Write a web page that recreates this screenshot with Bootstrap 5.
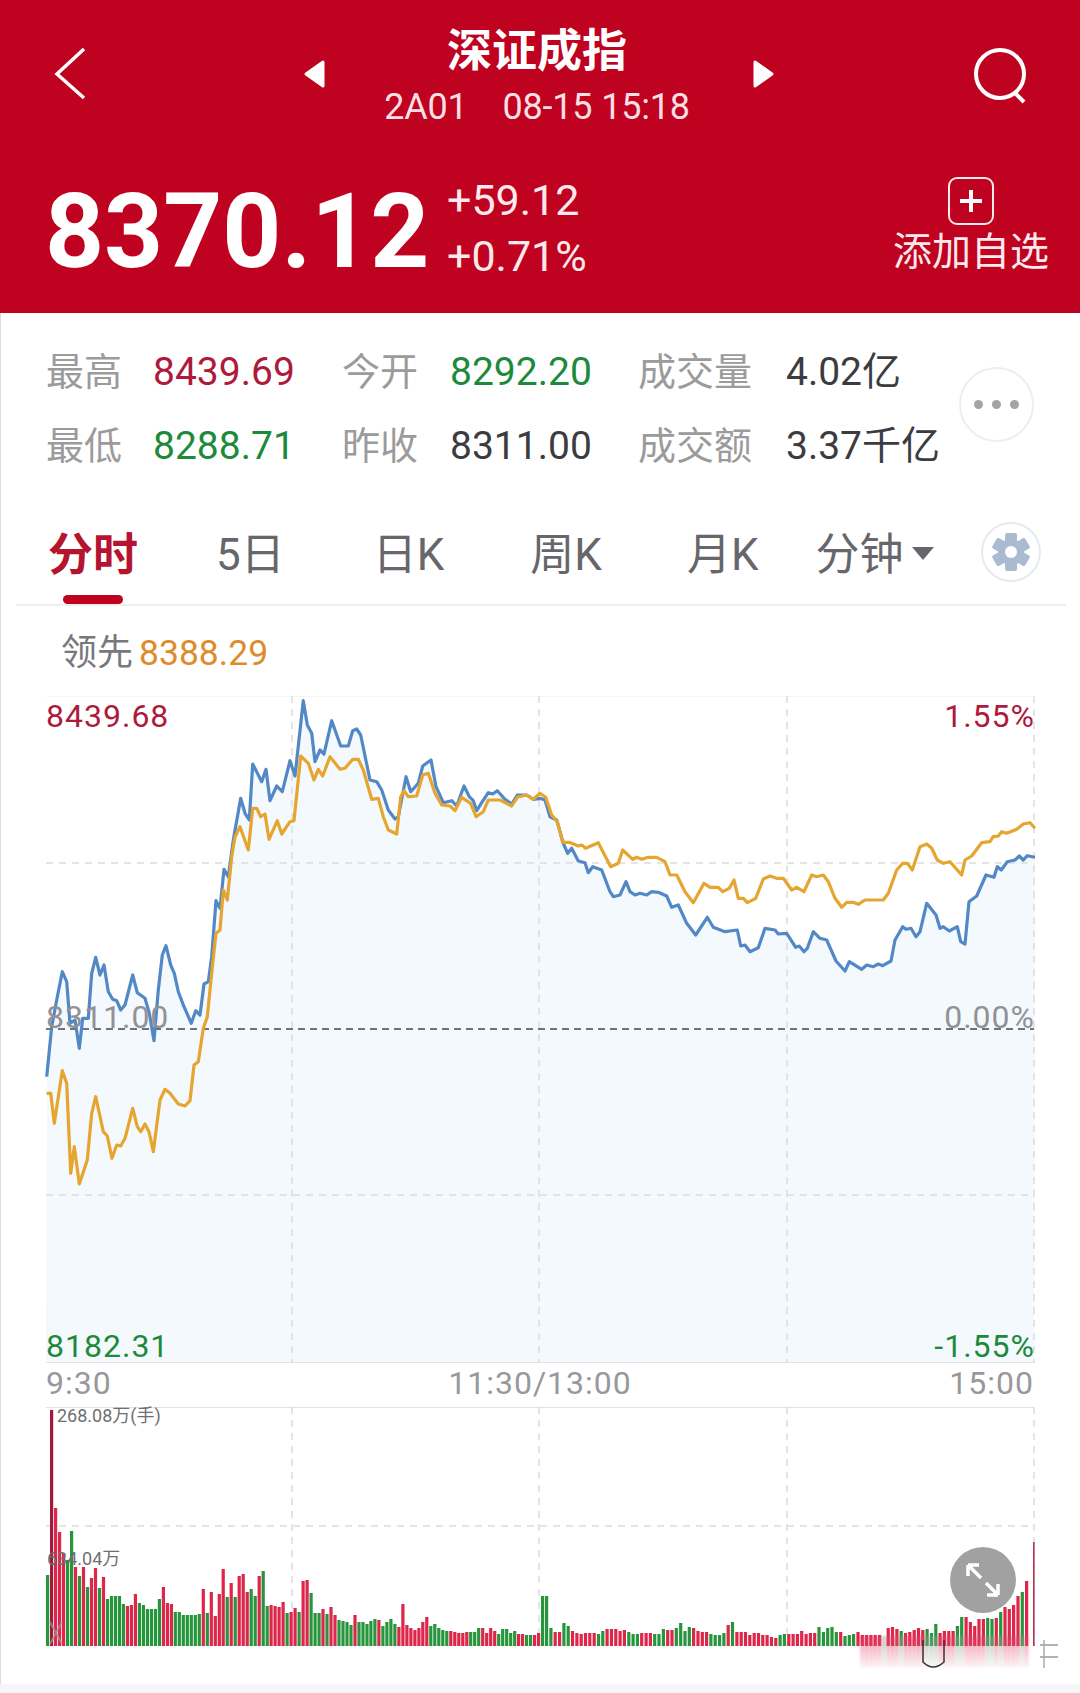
<!DOCTYPE html>
<html lang="zh-CN">
<head>
  <meta charset="UTF-8" />
  <title>深证成指</title>
  <link href="https://cdn.jsdelivr.net/npm/bootstrap@5.3.0/dist/css/bootstrap.min.css" rel="stylesheet" />
  <style>
    body {
      width: 1080px;
      height: 1693px;
      overflow: hidden;
      background-color: #fff;
      font-family: Roboto, "Noto Sans CJK SC", sans-serif;
      box-shadow: inset 1px 0 #ddd;
    }
    .quote-head {
      height: 313px;
      background-color: #bf021f;
      color: #fff;
      padding: 0 29px 0 47px;
    }
    .top-bar { height: 172px; margin-right: 20px; }
    .title-box { width: 414px; padding-right: 4px; }
    .title-main { font-size: 45px; line-height: 52px; font-weight: 700; margin-top: 26px; }
    .title-sub { font-size: 36px; line-height: 46px; margin-top: 6px; color: #fbdfe3; white-space: pre; letter-spacing: -.2px; }
    .price-big { font-size: 103px; line-height: 1; font-weight: 700; width: 402px; margin-left: -2px; }
    .price-diff { font-size: 43px; line-height: 56px; color: #fbe9ec; }
    .add-box { font-size: 39px; line-height: 44px; color: #fbe9ec; width: 160px; }
    .stat-wrap { height: 179px; padding: 22px 0 0 46px; }
    .stat-grid {
      display: grid;
      grid-template-columns: 107px 189px 108px 188px 148px 180px;
      grid-auto-rows: 74px;
      align-items: center;
      font-size: 39px;
      line-height: 1;
    }
    .stat-name { color: #9b9b9b; font-size: 38px; }
    .stat-val { color: #3c3c40; }
    .up-red { color: #ad1a3c; }
    .down-green { color: #1d8a3b; }
    .more-btn {
      width: 75px;
      height: 75px;
      border: 2px solid #eee;
      border-radius: 50%;
      margin: 32px 0 0 -7px;
      gap: 9px;
    }
    .more-btn i { width: 9px; height: 9px; border-radius: 50%; background-color: #a4a4a8; }
    .tab-row {
      height: 112px;
      margin: 0 39px 0 16px;
      padding-left: 32px;
      font-size: 44px;
      color: #66666b;
    }
    .tab-line { height: 2px; margin: 0 14px 0 16px; background-color: #eee; }
    .tab-item { line-height: 1; margin-top: 41px; white-space: nowrap; }
    .tab-item:nth-child(1) { margin-right: 78px; color: #b5142f; font-weight: 700; font-size: 45px; }
    .tab-item:nth-child(2) { margin-right: 88px; }
    .tab-item:nth-child(3) { margin-right: 86px; }
    .tab-item:nth-child(4) { margin-right: 85px; }
    .tab-item:nth-child(5) { margin-right: 57px; }
    .tab-mark {
      position: absolute;
      left: 15px;
      right: 15px;
      top: 62px;
      height: 9px;
      border-radius: 5px;
      background-color: #bf021f;
    }
    .caret-down {
      display: inline-block;
      border: 11px solid transparent;
      border-top: 13px solid #66666b;
      border-bottom: 0;
      margin-left: 8px;
      vertical-align: 10px;
    }
    .gear-btn { width: 60px; height: 60px; border: 2px solid #e6e9ee; border-radius: 50%; margin-top: 30px; }
    .legend-row { height: 90px; padding: 26px 0 0 61px; font-size: 36px; line-height: 1.2; color: #77777c; }
    .legend-row span { color: #df8b2b; margin-left: 6px; font-size: 35.5px; }
    .chart-box { position: relative; height: 667px; }
    .chart-box svg, .vol-box svg { display: block; }
    .chart-lbl { position: absolute; font-size: 32px; line-height: 1; letter-spacing: 1px; }
    .lbl-left { left: 46px; }
    .lbl-right { right: 45px; }
    .lbl-top { top: 4px; }
    .lbl-mid { top: 305px; color: #929296; }
    .lbl-bot { top: 634px; }
    .time-row { height: 44px; margin: 0 46px; font-size: 32px; line-height: 40px; color: #98989c; letter-spacing: 1px; }
    .time-row span { flex: 1 1 0; white-space: nowrap; }
    .vol-box { position: relative; height: 277px; }
    .vol-lbl { position: absolute; left: 57px; font-size: 18px; line-height: 1; color: #6f6f72; }
    .vol-top { top: 0; }
    .vol-mid { left: 47px; top: 143px; }
    .zoom-btn { position: absolute; left: 950px; top: 140px; width: 66px; height: 66px; border-radius: 50%; background-color: #a1a1a1; }
    .foot-bar { height: 9px; background-color: #f6f6f8; }
  </style>
</head>
<body>
  <header class="quote-head">
    <div class="top-bar d-flex justify-content-between">
      <svg width="60" height="125" viewBox="0 0 60 125"><path d="M37 50 L10 75 L37 99" transform="translate(0 -1)" fill="none" stroke="#fff" stroke-width="3.5"/></svg>
      <div class="d-flex">
        <svg width="30" height="125" viewBox="0 0 30 125"><path d="M21 62 V86 L4 74 Z" fill="#fff" stroke="#fff" stroke-width="3" stroke-linejoin="round"/></svg>
        <div class="title-box text-center">
          <div class="title-main">深证成指</div>
          <div class="title-sub">2A01    08-15 15:18</div>
        </div>
        <svg width="30" height="125" viewBox="0 0 30 125"><path d="M9 62 V86 L26 74 Z" fill="#fff" stroke="#fff" stroke-width="3" stroke-linejoin="round"/></svg>
      </div>
      <svg width="60" height="125" viewBox="0 0 60 125"><circle cx="29" cy="74" r="24" fill="none" stroke="#fff" stroke-width="4"/><path d="M43 92 L53 102" stroke="#fff" stroke-width="4"/></svg>
    </div>
    <div class="d-flex align-items-start justify-content-between">
      <div class="d-flex">
        <div class="price-big mt-2">8370.12</div>
        <div class="price-diff">+59.12<br>+0.71%</div>
      </div>
      <div class="add-box text-center mt-1">
        <svg class="d-block mx-auto" width="48" height="50" viewBox="0 0 48 50"><rect x="2" y="2" width="44" height="46" rx="8" fill="none" stroke="#fbe9ec" stroke-width="2"/><path d="M13 25 H35 M24 14 V36" stroke="#fff" stroke-width="4"/></svg>
        <div class="mt-1">添加自选</div>
      </div>
    </div>
  </header>

  <section class="stat-wrap d-flex">
    <div class="stat-grid">
      <div class="stat-name">最高</div><div class="up-red">8439.69</div>
      <div class="stat-name">今开</div><div class="down-green">8292.20</div>
      <div class="stat-name">成交量</div><div class="stat-val">4.02亿</div>
      <div class="stat-name">最低</div><div class="down-green">8288.71</div>
      <div class="stat-name">昨收</div><div class="stat-val">8311.00</div>
      <div class="stat-name">成交额</div><div class="stat-val">3.37千亿</div>
    </div>
    <div class="more-btn d-flex align-items-center justify-content-center"><i></i><i></i><i></i></div>
  </section>

  <nav class="tab-row d-flex">
    <div class="tab-item position-relative">分时<div class="tab-mark"></div></div>
    <div class="tab-item">5日</div>
    <div class="tab-item">日K</div>
    <div class="tab-item">周K</div>
    <div class="tab-item">月K</div>
    <div class="tab-item">分钟<span class="caret-down"></span></div>
    <div class="gear-btn d-flex align-items-center justify-content-center ms-auto">
      <svg width="38" height="40" viewBox="-19 -20 38 40">
        <g fill="#a9bbd1">
          <rect x="-6" y="-19" width="12" height="38" rx="2"/>
          <rect x="-6" y="-19" width="12" height="38" rx="2" transform="rotate(60)"/>
          <rect x="-6" y="-19" width="12" height="38" rx="2" transform="rotate(120)"/>
          <circle r="13"/>
        </g>
        <circle r="6" fill="#fff"/>
      </svg>
    </div>
  </nav>
  <div class="tab-line"></div>

  <div class="legend-row">领先<span>8388.29</span></div>

  <div class="chart-box">
    <svg id="priceChart" width="1080" height="667" viewBox="0 696 1080 667"></svg>
    <div class="chart-lbl lbl-left lbl-top up-red">8439.68</div>
    <div class="chart-lbl lbl-right lbl-top up-red">1.55%</div>
    <div class="chart-lbl lbl-left lbl-mid">8311.00</div>
    <div class="chart-lbl lbl-right lbl-mid">0.00%</div>
    <div class="chart-lbl lbl-left lbl-bot down-green">8182.31</div>
    <div class="chart-lbl lbl-right lbl-bot down-green">-1.55%</div>
  </div>

  <div class="time-row d-flex">
    <span>9:30</span><span class="text-center">11:30/13:00</span><span class="text-end">15:00</span>
  </div>

  <div class="vol-box">
    <svg id="volChart" width="1080" height="277" viewBox="0 1407 1080 277"></svg>
    <div class="vol-lbl vol-top">268.08万(手)</div>
    <div class="vol-lbl vol-mid">634.04万</div>
    <div class="zoom-btn">
      <svg width="66" height="66" viewBox="0 0 66 66"><path d="M18 18 L31 31 M18 18 H29 M18 18 V29 M48 48 L36 36 M48 48 H37 M48 48 V37" fill="none" stroke="#fff" stroke-width="3.5"/></svg>
    </div>
  </div>
  <div class="foot-bar"></div>

  <script src="https://cdn.jsdelivr.net/npm/bootstrap@5.3.0/dist/js/bootstrap.bundle.min.js"></script>
  <script>
    // traced from the picture, "x,y" pairs in crop coords
    const blueL = [50,1190,65,1040,80,960,97,875,110,905,120,1030,135,1020,148,1105,158,1015,175,1015,185,880,197,832,210,885,222,855,235,935,248,958,260,962,272,990,285,975,308,885,322,938,345,955,358,1000,372,1082,385,930,397,825,408,797,422,855,433,880,445,935,460,975,484,1030,497,992,510,1005,522,912,535,905,545,830,558,662,570,685,582,568,595,590,610,480,632,355,645,400,658,420,668,252,695,305,708,268,720,362,740,318,757,335,780,242,795,288,820,62,832,135,845,160,855,245,870,210,882,222,905,122,932,198,955,198,968,152,980,147,992,165,1020,300,1040,305,1055,330,1075,390,1095,417,1105,410,1128,290,1142,335,1165,310,1178,258,1203,240,1218,320,1240,368,1265,362,1280,378,1302,318,1318,350,1330,362,1340,392,1355,368,1375,338,1388,342,1402,332,1425,358,1445,372,1462,345,1490,345,1510,358,1530,355];
    const blueR = [30,355,45,360,60,410,80,420,100,490,113,520,125,505,145,543,165,548,175,578,188,560,215,570,240,635,250,650,270,645,288,605,300,635,315,645,330,640,350,645,365,635,385,637,410,648,425,682,445,675,470,730,497,765,532,712,550,742,585,755,622,750,632,798,645,795,660,815,685,803,705,745,735,750,745,762,770,760,797,802,808,798,822,815,832,805,850,755,870,775,890,780,918,843,945,873,958,845,995,868,1010,855,1030,860,1045,852,1058,857,1083,843,1095,780,1118,740,1128,748,1143,745,1158,770,1170,755,1190,670,1218,705,1230,745,1240,740,1258,753,1282,740,1292,785,1305,792,1317,665,1340,648,1368,585,1392,592,1402,560,1414,570,1432,545,1455,540,1468,528,1480,540,1492,527,1515,532];
    const orangeL = [50,1240,62,1240,73,1330,97,1172,110,1210,122,1480,133,1400,148,1512,172,1440,185,1300,197,1250,220,1355,232,1368,246,1435,260,1395,272,1398,285,1375,308,1285,322,1340,332,1355,345,1332,357,1355,370,1415,390,1260,405,1228,420,1240,445,1272,465,1278,480,1262,492,1155,505,1145,520,1045,532,1010,545,880,558,760,570,750,580,630,592,660,605,530,615,470,630,440,655,510,668,385,680,385,692,410,705,402,717,478,742,422,755,462,780,425,792,422,812,228,835,250,852,300,865,268,878,288,900,230,930,268,945,265,968,238,985,238,1000,270,1025,358,1045,355,1060,410,1075,450,1100,462,1112,350,1122,332,1135,350,1160,348,1178,285,1195,280,1215,340,1235,375,1260,378,1275,392,1295,352,1322,370,1338,410,1360,395,1375,360,1410,360,1445,378,1462,352,1490,345,1510,358,1530,340];
    const orangeR = [30,340,47,352,65,405,82,425,98,487,118,487,145,498,155,495,167,505,205,488,242,560,265,550,278,510,308,538,320,532,335,538,355,532,380,532,405,545,420,585,440,585,465,635,490,668,522,610,540,622,565,622,578,635,598,625,612,600,625,655,640,655,652,668,677,655,700,597,720,588,740,595,760,595,785,630,800,622,822,635,845,585,860,590,880,585,895,605,915,655,935,682,950,667,970,667,985,673,1005,660,1060,660,1075,640,1100,570,1118,550,1132,550,1147,570,1170,500,1190,492,1205,505,1222,540,1240,550,1260,545,1295,585,1305,540,1325,528,1355,488,1380,485,1390,470,1405,468,1415,455,1430,460,1460,448,1480,432,1500,428,1515,445];

    function toPage(pts, left) {
      const out = [];
      for (let i = 0; i < pts.length; i += 2) out.push((left + pts[i] / 3).toFixed(1) + "," + (680 + pts[i + 1] / 3).toFixed(1));
      return out;
    }
    const blue = toPage(blueL, 30).concat(toPage(blueR, 530));
    const orange = toPage(orangeL, 30).concat(toPage(orangeR, 530));

    let p = "";
    p += `<polygon points="46,1363 ${blue.join(" ")} 1034,1363" fill="#f4f9fe"/>`;
    p += `<path d="M46 696 H1034" stroke="#eee" stroke-width="1"/>`;
    p += `<path d="M46 1363 H1034" stroke="#e2e4e8" stroke-width="2"/>`;
    [863, 1195].forEach(y => p += `<path d="M46 ${y} H1034" stroke="#dcdce0" stroke-width="1.5" stroke-dasharray="7 6"/>`);
    [292, 539, 787, 1034].forEach(x => p += `<path d="M${x} 696 V1363" stroke="#dcdce0" stroke-width="1.5" stroke-dasharray="7 6"/>`);
    p += `<path d="M46 1029 H1034" stroke="#45454d" stroke-width="1.5" stroke-dasharray="7 5"/>`;
    p += `<polyline points="${blue.join(" ")}" fill="none" stroke="#5288c6" stroke-width="3.2" stroke-linejoin="round"/>`;
    p += `<polyline points="${orange.join(" ")}" fill="none" stroke="#e5a52f" stroke-width="3.2" stroke-linejoin="round"/>`;
    document.getElementById("priceChart").innerHTML = p;

    // bar heights in px, red positive, green negative
    const volL = [-71,236,138,114,93,-86,-115,79,-70,79,-59,68,78,-58,69,-47,-50,-50,-50,-42,40,41,52,-43,-41,-37,-37,-37,-47,59,43,42,-34,-34,-31,-31,-31,-31,-32,57,-33,54,30,52,77,-49,63,-49,70,72,54,-57,-50,70,-75,-40,41,40,39,44,-33,34,38,-34,65,66,-53,-33,-33,37,-32,39,31,-26,-25,-24,-21,31,-24,-24,-22,-25,-27,26,-20,-24,-27,-22,19,42,21,18,16,18,24,29,-20,-22,-18,-16,-15,15,14,13,13,14,-14,-14,-18,18,13,18,15,-12,-17,-17,-13,-15,12,12,-11,-11,11,13,-50];
    const volR = [-50,-18,14,14,-23,-20,15,13,12,13,13,13,-12,-15,17,17,17,15,16,-14,-12,-12,13,13,13,-12,-12,-17,16,16,-18,-23,-15,-19,18,15,14,14,-12,-11,-11,-13,21,-24,14,14,14,11,13,13,11,11,9,8,-11,-12,12,12,12,15,12,13,13,-19,-14,-18,-19,-14,14,-10,-11,-12,14,11,11,11,11,11,0,18,19,17,-15,13,14,16,18,16,-17,-13,-22,13,15,15,15,-20,-29,29,24,20,27,27,-28,-27,28,-34,39,37,41,50,-54,65];

    function bars(list, from, to) {
      const step = (to - from) / (list.length - 1);
      return list.map((h, i) => ({ x: from + i * step, h: Math.abs(h), red: h > 0 }));
    }
    const all = bars(volL, 46, 541).concat(bars(volR, 545, 1025));
    let v = "";
    v += `<path d="M46 1407 H1034" stroke="#e2e2e4" stroke-width="2"/>`;
    v += `<path d="M46 1526 H1034" stroke="#dcdce0" stroke-width="1.5" stroke-dasharray="7 6"/>`;
    [292, 539, 787, 1034].forEach(x => v += `<path d="M${x} 1407 V1646" stroke="#dcdce0" stroke-width="1.5" stroke-dasharray="7 6"/>`);
    all.forEach((b, i) => {
      let col = b.red ? "#dd2649" : "#26953c";
      if (i == 1) col = "#a3183c";
      v += `<rect x="${b.x.toFixed(1)}" y="${1646 - b.h}" width="3.2" height="${b.h}" fill="${col}"/>`;
    });
    v += `<rect x="1033" y="1542" width="1.6" height="104" fill="#b5304f"/>`;
    // smeared patch at the lower right of the shot
    v += `<defs><filter id="smear"><feGaussianBlur stdDeviation="1.4 1"/></filter><linearGradient id="fade" x1="0" y1="0" x2="0" y2="1"><stop offset="0" stop-color="#fff" stop-opacity=".1"/><stop offset="1" stop-color="#fff" stop-opacity=".95"/></linearGradient></defs><g filter="url(#smear)" opacity=".6">`;
    all.filter(b => b.x > 860).forEach(b => {
      v += `<rect x="${b.x.toFixed(1)}" y="1636" width="3" height="32" fill="${b.red ? "#e2476a" : "#8fa394"}"/>`;
    });
    v += `</g><rect x="858" y="1646" width="172" height="24" fill="url(#fade)"/>`;
    v += `<path d="M923 1640 V1662 Q933 1672 944 1662 V1640" fill="none" stroke="#333" stroke-width="1.5"/>`;
    v += `<path d="M1040 1645 H1058 M1040 1657 H1058" stroke="#999" stroke-width="1.5"/><path d="M1044 1640 V1668" stroke="#aaa" stroke-width="1.5"/>`;
    v += `<path d="M50 1622 L62 1644 M62 1622 L50 1644" stroke="#999" stroke-width="2" opacity=".7"/>`;
    document.getElementById("volChart").innerHTML = v;
  </script>
</body>
</html>
